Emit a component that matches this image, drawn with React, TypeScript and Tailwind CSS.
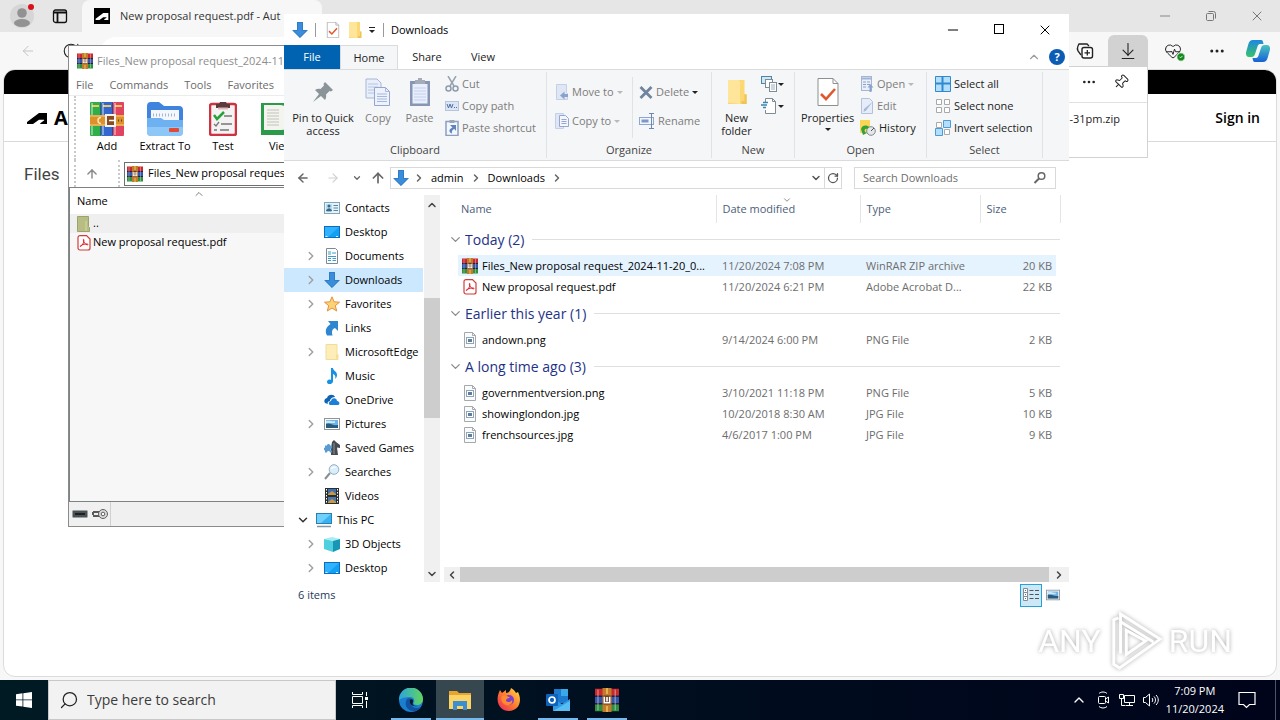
import { ReactNode } from "react";
import {
  ArrowDownToLine,
  ArrowLeft,
  ArrowRight,
  ArrowUp,
  CheckCircle2,
  ChevronDown,
  ChevronLeft,
  ChevronRight,
  ChevronUp,
  Ellipsis,
  HeartPulse,
  Minus,
  Pin,
  RotateCw,
  Search,
  X,
} from "lucide-react";

interface IIcon {
  className?: string;
}

/* ---------- shared icons ---------- */

const RarIcon = ({ className = "size-4" }: IIcon) => (
  <svg viewBox="0 0 16 16" className={className}>
    <rect width="16" height="5" y="0.5" fill="#c9282d" />
    <rect width="16" height="5" y="5.5" fill="#3557a8" />
    <rect width="16" height="5" y="10.5" fill="#2f8f3e" />
    <path d="M0 5.5h16M0 10.5h16" stroke="#2a1c3c" />
    <path d="M2 1v14M13.5 1v14" stroke="#fff" strokeOpacity="0.35" />
    <rect x="5" width="6" height="16" fill="#c27a2c" />
    <rect x="5.5" y="5" width="5" height="6" fill="#6b3b1e" />
    <path d="M6.2 5.8v4h3.6v-4M8 6v3" stroke="#fff" strokeWidth="1.1" fill="none" />
    <path d="M8 0v4M8 12v4" stroke="#f2c55c" />
  </svg>
);

const DownloadIcon = ({ className = "size-4" }: IIcon) => (
  <svg viewBox="0 0 16 16" className={className}>
    <path d="M5 0h6v8h5l-8 8-8-8h5z" fill="#3a8ddb" />
    <path d="M5.500.5h5v8h4.300L8 15.300 1.200 8.500h4.300z" fill="none" stroke="#2f7cc4" />
  </svg>
);

const PdfIcon = ({ className = "size-4" }: IIcon) => (
  <svg viewBox="0 0 16 16" className={className}>
    <path d="M4 .6h6.500l3.500 3.500V13a2 2 0 0 1-2 2H4a2 2 0 0 1-2-2V2.600a2 2 0 0 1 2-2z" fill="#fff" stroke="#d23c3c" strokeWidth="1.200" />
    <path d="M4.500 11.500c1.500-.6 3.500-3.500 3.400-6.500 0-1-.8-.8-.6.2.5 2.300 2 4.300 4 4.700 1 .1 1-.8 0-.9-2-.2-4.500.4-6.500 1.500-1 .6-.8 1.300-.3 1z" fill="none" stroke="#d8232a" />
  </svg>
);

const ImageFileIcon = () => (
  <svg viewBox="0 0 16 16" className="size-4">
    <path d="M2.500.5h8l3 3v12h-11z" fill="#fbfbfb" stroke="#a3a9ad" />
    <path d="M10.500.5v3h3" fill="none" stroke="#a3a9ad" />
    <rect x="4.500" y="5.500" width="7" height="6" fill="#fff" stroke="#8fa4b8" />
    <path d="M6 7h4v3H6z" fill="#5c7f9f" />
  </svg>
);

const FolderIcon = ({ className = "size-4" }: IIcon) => (
  <svg viewBox="0 0 16 16" className={className}>
    <path d="M2 0h11v9l1 1v6H2z" fill="#fbd873" />
    <path d="M2 0h7l1 1v15l-8-1z" fill="#ffe59a" />
    <path d="M13 9.500h1.500V16H11v-2h2z" fill="#efc454" />
  </svg>
);

const PaleFolderIcon = () => (
  <svg viewBox="0 0 16 16" className="size-4">
    <path d="M2 .5h11v9l1 1v5H2z" fill="#fdeeb9" stroke="#f3dc96" />
    <path d="M12 10.500h1.500v4H12z" fill="#f5dc91" />
  </svg>
);

const DesktopIcon = () => (
  <svg viewBox="0 0 16 16" className="size-4">
    <rect x=".5" y="2.500" width="15" height="11" fill="#12a0f5" stroke="#0c6dbf" />
    <path d="M1 3h14L4 13H1z" fill="#31b2ff" />
    <path d="M1.500 12.500h2M12 12.500h2" stroke="#dff2ff" />
  </svg>
);

const ContactsIcon = () => (
  <svg viewBox="0 0 16 16" className="size-4">
    <rect x=".5" y="2.500" width="15" height="11" fill="#e5f4fb" stroke="#7fa6bb" />
    <rect x="2" y="4" width="6" height="7" fill="#b7ddef" />
    <circle cx="5" cy="6" r="1.500" fill="#3c6886" />
    <path d="M2.500 11c0-3 5-3 5 0zM9.500 5.500H14M9.500 8H14M9.500 10.500H14" fill="#3c6886" stroke="#3c6886" strokeWidth=".8" />
  </svg>
);

const DocumentsIcon = () => (
  <svg viewBox="0 0 16 16" className="size-4">
    <path d="M2.500.5h9l2 2v13h-11z" fill="#fff" stroke="#7b8a94" />
    <path d="M4 4h3M4 6h3M8 5h4M4 8.500h8M4 10.500h3M8.500 10.500H12M4 12.500h3M8.500 12.500H12" stroke="#3d9bc9" />
  </svg>
);

const StarIcon = () => (
  <svg viewBox="0 0 16 16" className="size-4">
    <path d="M8 .8l2.100 5 5.400.4-4.200 3.500 1.400 5.300L8 12.100 3.300 15l1.400-5.300L.5 6.200l5.400-.4z" fill="#fbd277" stroke="#e4913c" />
  </svg>
);

const LinksIcon = () => (
  <svg viewBox="0 0 16 16" className="size-4">
    <path d="M4 1h10v10l-3-3c-3 1-3.500 3.500-2.500 7.500H3C.5 11 2 7 6.500 4z" fill="#2e86d0" />
  </svg>
);

const MusicIcon = () => (
  <svg viewBox="0 0 16 16" className="size-4">
    <path d="M7 0h2c0 3 4 3 4 7 0 2-1 3-2 4 1-3 0-4-2-5v7c0 4-6 4-6 1 0-2 2-3 4-2z" fill="#1791e0" />
  </svg>
);

const OneDriveIcon = () => (
  <svg viewBox="0 0 16 16" className="size-4">
    <path d="M1 11c-2-3 1-5 2-5 1-4 7-4 8-1 -4 0-5 3-5 4-2 0-3 2-2 3z" fill="#0f64b5" />
    <path d="M6 13c-2-1-1-4 1-4 1-4 6-3 6 0 3 0 3 4 1 4z" fill="#1a7fd6" />
  </svg>
);

const PicturesIcon = ({ className = "size-4" }: IIcon) => (
  <svg viewBox="0 0 16 16" className={className}>
    <rect x=".5" y="2.500" width="15" height="11" fill="#fff" stroke="#8b959c" />
    <rect x="2" y="4" width="12" height="8" fill="#6fb3e6" />
    <path d="M2 8c4-2 6 2 12 1v3H2z" fill="#2a5a7c" />
    <path d="M2 5c4-1 6 1 9 0v2H2z" fill="#cfe8f7" />
  </svg>
);

const GamesIcon = () => (
  <svg viewBox="0 0 16 16" className="size-4">
    <path d="M8 2l2-2 2 2 4 3v3l-3-.5 1 7.500H7V8z" fill="#454b50" />
    <path d="M1 5.500h2c0-2 3-2 3 0h2v3c-2 0-2 2 0 2v2H6c0-2-3-2-3 0H1v-2c-1.500 0-1.500-3 0-3z" fill="#5b9bd0" />
    <path d="M10 3v11" stroke="#8c9499" />
  </svg>
);

const SearchesIcon = () => (
  <svg viewBox="0 0 16 16" className="size-4">
    <path d="M1 15l5-6" stroke="#8a8f94" strokeWidth="2" />
    <circle cx="10" cy="5.500" r="4.800" fill="#d9effc" stroke="#93aec2" />
    <path d="M7.500 5c1-2 3-2 4.500-1.500" stroke="#fff" strokeWidth="1.300" fill="none" />
  </svg>
);

const VideosIcon = () => (
  <svg viewBox="0 0 16 16" className="size-4">
    <rect x="1" y="0" width="14" height="16" fill="#2a2d31" />
    <path d="M2.500 1v14M13.500 1v14" stroke="#fff" strokeDasharray="1.500 1.500" />
    <rect x="4" y="1" width="8" height="6" fill="#3f6fb0" />
    <rect x="4" y="9" width="8" height="6" fill="#4a77ae" />
    <path d="M4 6l4-3 4 3v1H4zM4 14l4-3 4 3v1H4z" fill="#c79a3b" />
  </svg>
);

const ThisPcIcon = () => (
  <svg viewBox="0 0 16 16" className="size-4">
    <rect x=".5" y="1.500" width="15" height="10" fill="#36b3f2" stroke="#2c7db0" />
    <path d="M1 2h14L5 11H1z" fill="#6fd0fb" />
    <path d="M1 14.500h14" stroke="#7f98a6" strokeWidth="1.500" />
  </svg>
);

const ObjectsIcon = () => (
  <svg viewBox="0 0 16 16" className="size-4">
    <path d="M0 3l8-2 8 2-6 2z" fill="#a8ecf3" />
    <path d="M0 3l9 2v11l-9-3z" fill="#4fcfe0" />
    <path d="M9 5l7-2v10l-7 3z" fill="#1896b5" />
  </svg>
);

/* ---------- ribbon icons ---------- */

const PinIcon = () => (
  <svg viewBox="0 0 24 24" className="size-6">
    <path d="M14 2l8 8-2 1.500-1.500-.5-3.500 3.500c.5 2 0 4-1 5.500l-4-4L2 22l6-8-4-4c1.500-1 3.500-1.500 5.500-1L13 5.500 12.500 4z" fill="#8b9599" />
  </svg>
);

const CopyIcon = () => (
  <svg viewBox="0 0 26 28" className="h-7 w-[26px]">
    <path d="M1 1h11l4 4v15H1z" fill="#e9effa" stroke="#a9b7d6" />
    <path d="M3 6h10M3 9h10M3 12h6M3 15h6" stroke="#b7c5e3" />
    <path d="M9.500 9.500h11l4 4v14h-15z" fill="#edf2fc" stroke="#94a7d0" />
    <path d="M20.500 9.500v4h4M12 16h10M12 18.500h10M12 21h10M12 23.500h10" stroke="#a6b7dd" fill="none" />
  </svg>
);

const PasteIcon = () => (
  <svg viewBox="0 0 22 28" className="h-7 w-[22px]">
    <rect x="1" y="3" width="20" height="25" fill="#8696b4" />
    <rect x="3.500" y="6" width="15" height="19.500" fill="#e8eefb" />
    <path d="M9 0h4v2h3v4H6V2h3z" fill="#a3acb8" />
    <path d="M5 10h12M5 13h12M5 16h12M5 19h12M5 22h12" stroke="#c4d1ee" />
  </svg>
);

const CutIcon = () => (
  <svg viewBox="0 0 14 16" className="h-4 w-3.5">
    <path d="M3 0l6 10M11 0L5 10" stroke="#9aa4ae" strokeWidth="1.500" />
    <circle cx="3.500" cy="12.500" r="2.500" fill="none" stroke="#8f9cad" strokeWidth="1.500" />
    <circle cx="10.500" cy="12.500" r="2.500" fill="none" stroke="#8f9cad" strokeWidth="1.500" />
  </svg>
);

const CopyPathIcon = () => (
  <svg viewBox="0 0 14 16" className="h-4 w-3.5">
    <rect x=".5" y="3.500" width="13" height="9" fill="#dbe5f5" stroke="#b6c5df" />
    <path d="M2 6l1.500 4L5 6l1.500 4L8 6M9 9.500h1M11 9.500h1" fill="none" stroke="#53729f" />
  </svg>
);

const PasteShortcutIcon = () => (
  <svg viewBox="0 0 14 16" className="h-4 w-3.5">
    <rect x="1" y="1.500" width="12" height="14" fill="#f3f7fd" stroke="#8c9fc0" strokeWidth="1.500" />
    <path d="M4.500 0h5v3h-5z" fill="#9aa6b8" />
    <path d="M5 5h6v6L9.500 9C7.500 9.500 6.500 11 7 13.500c-3.500-1-3.500-4.500.5-6z" fill="#5d84bd" />
  </svg>
);

const MoveToIcon = () => (
  <svg viewBox="0 0 14 16" className="h-4 w-3.5">
    <path d="M1.500.5h10v8l1 1v6h-11z" fill="#dfe7f5" stroke="#c3d0e8" />
    <path d="M13 10H9.500V7.500L5 11.500l4.500 4V13H13z" fill="#8ba3cc" />
  </svg>
);

const CopyToIcon = () => (
  <svg viewBox="0 0 14 16" className="h-4 w-3.5">
    <path d="M.5.5h8v15h-8z" fill="#dfe7f5" stroke="#c3d0e8" />
    <path d="M4.500 2.500h6l3 3v8h-9z" fill="#f3f6fc" stroke="#93a7cf" />
    <path d="M6.500 6.500h5M6.500 8.500h5M6.500 10.500h5" stroke="#93a7cf" />
  </svg>
);

const DeleteIcon = () => (
  <svg viewBox="0 0 14 16" className="h-4 w-3.5">
    <path d="M1.500 3l11 11M12.500 3l-11 11" stroke="#71849f" strokeWidth="2.800" />
  </svg>
);

const RenameIcon = () => (
  <svg viewBox="0 0 16 16" className="size-4">
    <rect x=".5" y="4.500" width="14" height="7" fill="#f1f5fc" stroke="#8fa7d0" />
    <path d="M2.500 6.500h7v3h-7z" fill="#7d98c8" />
    <path d="M10 .5h5M12.500.5v15M10 15.500h5" stroke="#6e86ad" />
  </svg>
);

const NewItemIcon = () => (
  <svg viewBox="0 0 16 16" className="size-4">
    <rect x=".5" y=".5" width="10" height="7" fill="#cfe6f3" stroke="#4b87a8" />
    <rect x="4.500" y="3.500" width="7" height="8" fill="#fff" stroke="#7d8c95" />
    <rect x="8.500" y="6.500" width="7" height="9" fill="#fff" stroke="#7d8c95" />
    <path d="M10 9h4M10 11h4M10 13h4" stroke="#9fb0b9" />
  </svg>
);

const EasyAccessIcon = () => (
  <svg viewBox="0 0 16 16" className="size-4">
    <path d="M4.500 5V.5h7l3 3v12h-10V12" fill="#fff" stroke="#7d8c95" />
    <path d="M11.500.5v3h3" fill="none" stroke="#7d8c95" />
    <path d="M2 4.500h5M0 7h6M2 9.500h3" stroke="#3b86b0" strokeWidth="1.300" />
  </svg>
);

const PropertiesIcon = ({ className = "h-7 w-[22px]" }: IIcon) => (
  <svg viewBox="0 0 22 28" className={className}>
    <path d="M1 .5h15l5 5v22H1z" fill="#fff" stroke="#8f8f8f" />
    <path d="M16 .5v5h5" fill="none" stroke="#8f8f8f" />
    <path d="M4 16l5 5 9-10" fill="none" stroke="#e0582f" strokeWidth="2.600" />
  </svg>
);

const OpenIcon = () => (
  <svg viewBox="0 0 14 16" className="h-4 w-3.5">
    <rect x="1.500" y=".5" width="10" height="14" fill="#eaf0fa" stroke="#a5b4d1" />
    <path d="M2 2.500h9" stroke="#9fb2d6" strokeWidth="2" />
    <path d="M3 6h3M3 8.500h3M3 11h3M7 6h3M7 8.500h3" stroke="#8aa0ca" />
    <path d="M10.500 8l3 3.500h-2V16h-2v-4.500h-2z" fill="#8ba3cc" />
  </svg>
);

const EditIcon = () => (
  <svg viewBox="0 0 14 16" className="h-4 w-3.5">
    <path d="M1.500.5h8l3 3v12h-11z" fill="#e6edf9" stroke="#b3c1dc" />
    <path d="M12.500 4L6 12.500l-2.500 1.500.5-3z" fill="#a5b7d8" />
  </svg>
);

const HistoryIcon = () => (
  <svg viewBox="0 0 16 16" className="size-4">
    <path d="M0 0h10v9l1 1v3H0z" fill="#fbd554" />
    <circle cx="11" cy="11" r="4.300" fill="#e4e8ea" stroke="#82898d" />
    <path d="M11 11l3-3" stroke="#4e5558" />
    <path d="M1 9c1-4 6-4.500 8-2L7 9c-2-1-3 1-2 3l2 1-4 2z" fill="#2fa23c" />
  </svg>
);

const SelectAllIcon = () => (
  <svg viewBox="0 0 16 16" className="size-4">
    <path d="M.5.5h15v15H.5z" fill="#b4defa" stroke="#2f8ad0" />
    <path d="M7.500 0v16M0 7.500h16" stroke="#2f8ad0" strokeWidth="2" />
  </svg>
);

const SelectNoneIcon = () => (
  <svg viewBox="0 0 16 16" className="size-4">
    <path d="M1.500 1.500h5v5h-5zM9.500 1.500h5v5h-5zM1.500 9.500h5v5h-5zM9.500 9.500h5v5h-5z" fill="#fff" stroke="#a9a9a9" />
  </svg>
);

const InvertIcon = () => (
  <svg viewBox="0 0 16 16" className="size-4">
    <path d="M1.500 2.500h5v5h-5zM9.500 9.500h5v5h-5z" fill="#fff" stroke="#a9a9a9" />
    <path d="M8.500.5h7v7h-7zM.5 8.500h7v7h-7z" fill="#b4defa" stroke="#4b9bd8" />
  </svg>
);

/* ---------- browser ---------- */

const AutodeskMark = ({ className }: IIcon) => (
  <svg viewBox="0 0 22 16" className={className}>
    <path d="M1 14V12L13 3h8v11h-6c-1 0-1-.6-.4-1L18 10.500c.4-.3.200-.7-.3-.7H13L7 14z" fill="currentColor" />
  </svg>
);

const CopilotIcon = () => (
  <svg viewBox="0 0 24 24" className="size-6">
    <defs>
      <linearGradient id="cop1" x1="0" y1="0" x2="0" y2="1">
        <stop offset="0" stopColor="#1f87e0" />
        <stop offset="1" stopColor="#35c46b" />
      </linearGradient>
      <linearGradient id="cop2" x1="0" y1="0" x2="0" y2="1">
        <stop offset="0" stopColor="#49c5c2" />
        <stop offset="1" stopColor="#1660d8" />
      </linearGradient>
    </defs>
    <path d="M7 1h8c2 0 2 2 2.500 4H14c-1.500 0-2 1-2.500 2.500L9 15c-.6 2-1.500 3-3.500 3H3c-3 0-3.500-3-2.600-6l2-7C3.200 2.300 4.500 1 7 1z" fill="url(#cop1)" />
    <path d="M17 23H9c-2 0-2-2-2.500-4H10c1.500 0 2-1 2.500-2.500L15 9c.6-2 1.500-3 3.500-3H21c3 0 3.500 3 2.600 6l-2 7c-.8 2.700-2.100 4-4.600 4z" fill="url(#cop2)" />
  </svg>
);

const Browser = () => (
  <section className="absolute inset-0 flex flex-col bg-[#f7f7f7]">
    <div className="flex h-8 items-stretch bg-[#e6e6e6]">
      <button aria-label="Profile" className="relative ml-2 flex w-7 items-center justify-center">
        <svg viewBox="0 0 24 24" className="size-6">
          <circle cx="12" cy="12" r="12" fill="#d6d6d6" />
          <circle cx="12" cy="9" r="4.800" fill="#929292" />
          <ellipse cx="12" cy="19" rx="8" ry="4" fill="#929292" />
        </svg>
        <span className="absolute top-1 right-0.5 size-1.5 rounded-full bg-[#d8121c]" />
      </button>
      <button aria-label="Tab actions" className="ml-4 flex w-4 items-center">
        <svg viewBox="0 0 16 16" className="size-4">
          <rect x="1.500" y="2" width="13" height="12.500" rx="2" fill="none" stroke="#111" strokeWidth="1.300" />
          <path d="M1.500 4.500h13M5.500 5v9" stroke="#111" strokeWidth="1.800" />
        </svg>
      </button>
      <div className="ml-3.5 flex w-[240px] items-center gap-2.5 rounded-t-lg bg-[#f7f7f7] pl-3 text-[#333]">
        <span className="flex size-4 shrink-0 items-center justify-center bg-black text-white">
          <AutodeskMark className="w-3.5" />
        </span>
        <span className="text-[11px] whitespace-nowrap">New proposal request.pdf - Aut</span>
      </div>
      <div className="ml-auto flex items-center gap-7.5 pr-[15px] text-[#777]">
        <button aria-label="Minimize"><Minus className="size-4" strokeWidth={1.300} /></button>
        <button aria-label="Restore">
          <svg viewBox="0 0 16 16" className="size-4">
            <rect x="3.500" y="5.500" width="7" height="7" rx="1" fill="none" stroke="#777" />
            <path d="M5.500 3.500h5a2 2 0 0 1 2 2v5" fill="none" stroke="#777" />
          </svg>
        </button>
        <button aria-label="Close"><X className="size-4" strokeWidth={1.500} /></button>
      </div>
    </div>
    <div className="flex h-[37px] shrink-0 items-center pr-2.5 text-[#222]">
      <button aria-label="Back" className="ml-5 text-[#c4c4c4]"><ArrowLeft className="size-4" strokeWidth={1.500} /></button>
      <button aria-label="Refresh" className="ml-6.5"><RotateCw className="size-4.5" strokeWidth={1.500} /></button>
      <div className="mt-1 ml-5 flex h-8 flex-1 items-center rounded-2xl bg-white pl-4">
        <Search className="size-4" strokeWidth={1.300} />
      </div>
      <button aria-label="Collections" className="mr-3.5 ml-3">
        <svg viewBox="0 0 18 18" className="size-4.5">
          <path d="M5 13L2 9c-1-2-1-3 0-5l1-2h8l2 2" fill="none" stroke="#222" strokeWidth="1.300" />
          <rect x="6" y="5.500" width="10.500" height="10.500" rx="2" fill="#fff" stroke="#222" strokeWidth="1.400" />
          <path d="M11.300 8v5.500M8.500 10.800H14" stroke="#222" strokeWidth="1.300" />
        </svg>
      </button>
      <button aria-label="Downloads" className="flex h-8 w-10 items-center justify-center rounded-t-md bg-[#d2d2d2]">
        <ArrowDownToLine className="size-5" strokeWidth={1.300} />
      </button>
      <button aria-label="Browser essentials" className="relative ml-4">
        <HeartPulse className="size-4.5" strokeWidth={1.300} />
        <CheckCircle2 className="absolute -right-1 -bottom-0.5 size-2.5 fill-[#178a1e] text-white" />
      </button>
      <button aria-label="More" className="ml-6.5"><Ellipsis className="size-4.5" /></button>
      <button aria-label="Copilot" className="ml-5"><CopilotIcon /></button>
    </div>
    <div className="mr-[3px] mb-[3px] ml-[3px] flex flex-1 flex-col overflow-hidden rounded-xl border border-[#dcdcdc] bg-white">
      <div className="h-6 bg-black" />
      <header className="flex h-12 items-center justify-between border-b border-[#d9d9d9] pr-4 pl-[22px]">
        <span className="flex items-center gap-1.5 text-xl font-bold">
          <AutodeskMark className="w-[22px]" />
          A
        </span>
        <a href="#signin" className="text-sm font-semibold">Sign in</a>
      </header>
      <h1 className="mt-5 ml-5 font-['Roboto',sans-serif] text-[17px] leading-6 text-[#444]">Files</h1>
    </div>
    <div className="absolute top-[66px] right-[132px] flex w-[120px] flex-col border border-[#d2d2d2] bg-white text-[#222]">
      <div className="flex h-9 items-start justify-end gap-4 border-b border-[#e2e2e2] pt-[7px] pr-4.5">
        <Ellipsis className="size-4" />
        <Pin className="size-4 rotate-45" strokeWidth={1.500} />
      </div>
      <p className="flex h-[54px] justify-end pt-1 pr-[27px] text-[11px] leading-6">-31pm.zip</p>
    </div>
  </section>
);

/* ---------- WinRAR ---------- */

const rarTools = [
  {
    name: "Add",
    icon: (
      <svg viewBox="0 0 34 34" className="size-[34px]">
        <rect x="0" y="0" width="11" height="34" rx="1" fill="#2fae4a" />
        <rect x="11" y="0" width="12" height="34" rx="1" fill="#3468cf" />
        <rect x="23" y="0" width="11" height="34" rx="1" fill="#e04460" />
        <path d="M2 4h7M13 4h8M25 4h7" stroke="#f0c95c" strokeWidth="2" />
        <path d="M2 1v32M13 1v32M25 1v32" stroke="#fff" strokeOpacity=".4" strokeWidth="2" />
        <path d="M10.500 0v34M22.500 0v34" stroke="#1d2d55" strokeOpacity=".5" />
        <rect x="0" y="13" width="34" height="11" fill="#dc912c" />
        <path d="M0 14h34M0 23h34" stroke="#f6cf77" />
        <rect x="16" y="13" width="9" height="11" fill="#8a4b1d" stroke="#f3f3f3" strokeWidth="2" />
        <path d="M19 18.500h6" stroke="#fff" strokeWidth="1.500" />
        <path d="M11 15.500a3 3 0 1 0 0 6" fill="none" stroke="#fbe7b4" strokeWidth="1.500" />
        <path d="M28 18.500h1M31 18.500h1" stroke="#6b3b1e" strokeWidth="2" />
      </svg>
    ),
  },
  {
    name: "Extract To",
    icon: (
      <svg viewBox="0 0 36 34" className="h-[34px] w-9">
        <path d="M0 4a4 4 0 0 1 4-4h8l5 4h15a4 4 0 0 1 4 4v10H0z" fill="#3f83df" />
        <rect x="4" y="8" width="28" height="14" fill="#f4f7fb" />
        <path d="M6 13h24" stroke="#a6b8cf" strokeDasharray="1 2" strokeWidth="3" />
        <path d="M0 16h14l3 2h19v12a4 4 0 0 1-4 4H4a4 4 0 0 1-4-4z" fill="#6db1f3" />
        <path d="M0 25h36v5a4 4 0 0 1-4 4H4a4 4 0 0 1-4-4z" fill="#8cc7f8" />
        <rect x="22" y="26" width="10" height="4" rx="1" fill="#e14a34" />
      </svg>
    ),
  },
  {
    name: "Test",
    icon: (
      <svg viewBox="0 0 28 34" className="h-[34px] w-7">
        <rect x="1" y="2" width="26" height="31" rx="2" fill="#f3f3f3" stroke="#cf3240" strokeWidth="2.500" />
        <path d="M7 2h3l1-2h6l1 2h3v4H7z" fill="#5a3a3d" />
        <path d="M9 6.500h10" stroke="#e3b6ba" strokeWidth="2" />
        <path d="M5 13l3 4 7-7" fill="none" stroke="#28a03c" strokeWidth="2.500" />
        <path d="M15 14h8M5 22l2 2 3-4M12 22h11M5 28h3M11 28h9" stroke="#777" strokeWidth="1.300" fill="none" />
      </svg>
    ),
  },
  {
    name: "View",
    icon: (
      <svg viewBox="0 0 40 34" className="h-[34px] w-10">
        <rect x="0" y="1" width="25" height="32" fill="#2b9a4a" />
        <rect x="25" y="3" width="15" height="28" fill="#8b1e2a" />
        <path d="M3 3h16c3 0 5 1 6 3v23c-2-2-4-1-6-1H3z" fill="#f4f4ee" />
        <path d="M6 8h12M6 11h12M6 14h12M6 17h12M6 20h12M6 23h12" stroke="#c2c2bc" />
      </svg>
    ),
  },
];

const WinRar = () => (
  <section className="absolute top-[45px] left-[68px] flex h-[482px] w-[260px] flex-col overflow-hidden border border-[#8b8b8b] bg-white text-[11px]">
    <div className="flex h-[30px] shrink-0 items-center gap-1 pl-2 whitespace-nowrap text-[#8d8d8d]">
      <RarIcon className="size-4" />
      <span>Files_New proposal request_2024-11</span>
    </div>
    <nav className="flex h-5 shrink-0 items-center gap-4 border-b border-[#ececec] pl-[7px] text-[#6b6b6b]">
      <button>File</button>
      <button>Commands</button>
      <button>Tools</button>
      <button>Favorites</button>
    </nav>
    <div className="ml-[5px] flex h-16 shrink-0 items-start border-l-2 border-dotted border-[#c9c9c9] pt-1.5 pl-0.5">
      {rarTools.map((tool) => (
        <button key={tool.name} className="flex w-[58px] shrink-0 flex-col items-center whitespace-nowrap">
          {tool.icon}
          <span className="leading-5">{tool.name}</span>
        </button>
      ))}
    </div>
    <div className="ml-[5px] flex h-[27px] shrink-0 items-center border-l-2 border-dotted border-[#c9c9c9]">
      <button aria-label="Up" className="flex w-8 justify-center text-[#8a8a8a]"><ArrowUp className="size-3.5" strokeWidth={2.500} /></button>
      <span className="ml-2.5 h-full border-l-2 border-dotted border-[#c9c9c9]" />
      <label className="ml-1 flex h-6 flex-1 items-center gap-[5px] border border-[#6f6f6f] pl-0.5">
        <RarIcon className="size-4 shrink-0" />
        <input aria-label="Archive path" className="min-w-0 flex-1 outline-none" defaultValue="Files_New proposal request_2024" />
      </label>
    </div>
    <div className="flex flex-1 flex-col border border-[#7d8285] bg-[#f7f7f7]">
      <div className="relative flex h-[26px] items-center bg-white pl-[7px]">
        Name
        <ChevronUp className="absolute top-0 left-[123px] size-3 text-[#555]" strokeWidth={1.500} />
      </div>
      <div className="flex h-[19px] items-center gap-px bg-[#efefef] pl-1.5">
        <svg viewBox="0 0 16 16" className="size-4">
          <path d="M1.500.5h11v10l1 1v4h-12z" fill="#b8bd84" stroke="#9da36c" />
          <path d="M10 5v10" stroke="#d3d7a8" />
        </svg>
        <span>..</span>
      </div>
      <div className="flex h-[19px] items-center gap-px pl-1.5">
        <PdfIcon />
        <span>New proposal request.pdf</span>
      </div>
    </div>
    <div className="flex h-6 shrink-0 items-stretch bg-[#f0f0f0]">
      <span className="flex w-[42px] items-center justify-center gap-1 border-r border-[#d0d0d0]">
        <svg viewBox="0 0 16 8" className="h-2 w-4">
          <rect x=".5" y=".5" width="15" height="7" rx="1" fill="#4a5053" stroke="#98a0a3" />
          <path d="M3 4h10" stroke="#1d2022" strokeWidth="2" />
        </svg>
        <svg viewBox="0 0 16 12" className="h-3 w-4">
          <path d="M1 4h8M1 8h8M1 4v3" stroke="#5a5a5a" strokeWidth="2" />
          <circle cx="11" cy="6" r="4.500" fill="#d9d9d9" stroke="#606060" />
          <circle cx="11" cy="6" r="1.800" fill="#fff" stroke="#606060" />
        </svg>
      </span>
    </div>
  </section>
);

/* ---------- Explorer ---------- */

interface IRibbonGroup {
  name: string;
  className: string;
  children: ReactNode;
}

const RibbonGroup = ({ name, className, children }: IRibbonGroup) => (
  <div className={`my-0.5 flex flex-col border-r border-[#dfe3e7] ${className}`}>
    <div className="flex flex-1 pt-px">{children}</div>
    <span className="text-center leading-4 text-[#444]">{name}</span>
  </div>
);

interface IBigButton {
  icon: ReactNode;
  className: string;
  children: ReactNode;
}

const BigButton = ({ icon, className, children }: IBigButton) => (
  <button className={`flex flex-col items-center pt-1 leading-[13px] ${className}`}>
    <span className="mb-[5px] flex h-[29px] items-center">{icon}</span>
    {children}
  </button>
);

interface ISmallButton {
  icon: ReactNode;
  label: string;
  muted?: boolean;
  arrow?: string;
}

const Caret = ({ className = "text-[#222]" }: IIcon) => (
  <svg viewBox="0 0 6 3" className={`h-[3px] w-1.5 ${className}`}>
    <path d="M0 0h6L3 3z" fill="currentColor" />
  </svg>
);

const SmallButton = ({ icon, label, muted, arrow }: ISmallButton) => (
  <button className={`flex h-[22px] items-center gap-[3px] whitespace-nowrap ${muted ? "text-[#7c7c7c]" : "text-[#222]"}`}>
    {icon}
    {label}
    {arrow && <Caret className={arrow} />}
  </button>
);

const Ribbon = () => (
  <div className="flex h-[92px] shrink-0 border-y border-[#dadbdc] bg-[#f5f6f7]">
    <RibbonGroup name="Clipboard" className="w-[263px]">
      <BigButton icon={<PinIcon />} className="w-[78px]">Pin to Quick<br />access</BigButton>
      <BigButton icon={<CopyIcon />} className="w-8 text-[#7c7c7c]">Copy</BigButton>
      <BigButton icon={<PasteIcon />} className="w-[51px] text-[#7c7c7c]">Paste</BigButton>
      <div className="flex flex-col">
        <SmallButton icon={<CutIcon />} label="Cut" muted />
        <SmallButton icon={<CopyPathIcon />} label="Copy path" muted />
        <SmallButton icon={<PasteShortcutIcon />} label="Paste shortcut" muted />
      </div>
    </RibbonGroup>
    <RibbonGroup name="Organize" className="w-[165px]">
      <div className="my-1 flex w-[86px] flex-col gap-[7px] border-r border-[#dfe3e7] pt-1 pl-2">
        <SmallButton icon={<MoveToIcon />} label="Move to" muted arrow="text-[#b9b9b9]" />
        <SmallButton icon={<CopyToIcon />} label="Copy to" muted arrow="text-[#b9b9b9]" />
      </div>
      <div className="my-1 flex flex-col gap-[7px] pt-1 pl-1.5">
        <SmallButton icon={<DeleteIcon />} label="Delete" muted arrow="text-[#222]" />
        <SmallButton icon={<RenameIcon />} label="Rename" muted />
      </div>
    </RibbonGroup>
    <RibbonGroup name="New" className="w-[83px]">
      <BigButton icon={<FolderIcon className="h-[26px] w-6" />} className="w-[49px]">New<br />folder</BigButton>
      <div className="flex flex-col">
        <button aria-label="New item" className="flex h-[22px] items-center gap-px"><NewItemIcon /><Caret /></button>
        <button aria-label="Easy access" className="flex h-[22px] items-center gap-px"><EasyAccessIcon /><Caret /></button>
      </div>
    </RibbonGroup>
    <RibbonGroup name="Open" className="w-[132px]">
      <BigButton icon={<PropertiesIcon />} className="w-[65px]">
        Properties
        <Caret className="mt-1 text-[#222]" />
      </BigButton>
      <div className="flex flex-col">
        <SmallButton icon={<OpenIcon />} label="Open" muted arrow="text-[#b9b9b9]" />
        <SmallButton icon={<EditIcon />} label="Edit" muted />
        <SmallButton icon={<HistoryIcon />} label="History" />
      </div>
    </RibbonGroup>
    <RibbonGroup name="Select" className="w-[116px]">
      <div className="flex flex-col pl-2">
        <SmallButton icon={<SelectAllIcon />} label="Select all" />
        <SmallButton icon={<SelectNoneIcon />} label="Select none" />
        <SmallButton icon={<InvertIcon />} label="Invert selection" />
      </div>
    </RibbonGroup>
  </div>
);

const folders = [
  { name: "Contacts", icon: <ContactsIcon />, expandable: false },
  { name: "Desktop", icon: <DesktopIcon />, expandable: false },
  { name: "Documents", icon: <DocumentsIcon />, expandable: true },
  { name: "Downloads", icon: <DownloadIcon />, expandable: true, active: true },
  { name: "Favorites", icon: <StarIcon />, expandable: true },
  { name: "Links", icon: <LinksIcon />, expandable: false },
  { name: "MicrosoftEdge", icon: <PaleFolderIcon />, expandable: true },
  { name: "Music", icon: <MusicIcon />, expandable: false },
  { name: "OneDrive", icon: <OneDriveIcon />, expandable: false },
  { name: "Pictures", icon: <PicturesIcon />, expandable: true },
  { name: "Saved Games", icon: <GamesIcon />, expandable: false },
  { name: "Searches", icon: <SearchesIcon />, expandable: true },
  { name: "Videos", icon: <VideosIcon />, expandable: false },
  { name: "This PC", icon: <ThisPcIcon />, expandable: true, root: true },
  { name: "3D Objects", icon: <ObjectsIcon />, expandable: true },
  { name: "Desktop", icon: <DesktopIcon />, expandable: true },
];

const FolderTree = () => (
  <ul className="w-[139px] shrink-0 overflow-hidden pt-px text-black">
    {folders.map((folder, i) => (
      <li key={i}>
        <button
          className={`flex h-6 w-full items-center whitespace-nowrap ${folder.root ? "pl-3" : "pl-5"} ${folder.active ? "bg-[#cce8ff]" : ""}`}
        >
          <span className="flex w-5 shrink-0">
            {folder.expandable &&
              (folder.root ? (
                <ChevronDown className="size-3.5 text-[#333]" strokeWidth={2.500} />
              ) : (
                <ChevronRight className="size-3.5 text-[#a0a0a0]" strokeWidth={2.500} />
              ))}
          </span>
          <span className="mr-[5px] shrink-0">{folder.icon}</span>
          {folder.name}
        </button>
      </li>
    ))}
  </ul>
);

const groups = [
  {
    title: "Today (2)",
    files: [
      { name: "Files_New proposal request_2024-11-20_0...", icon: <RarIcon />, date: "11/20/2024 7:08 PM", type: "WinRAR ZIP archive", size: "20 KB", active: true },
      { name: "New proposal request.pdf", icon: <PdfIcon />, date: "11/20/2024 6:21 PM", type: "Adobe Acrobat D...", size: "22 KB" },
    ],
  },
  {
    title: "Earlier this year (1)",
    files: [{ name: "andown.png", icon: <ImageFileIcon />, date: "9/14/2024 6:00 PM", type: "PNG File", size: "2 KB" }],
  },
  {
    title: "A long time ago (3)",
    files: [
      { name: "governmentversion.png", icon: <ImageFileIcon />, date: "3/10/2021 11:18 PM", type: "PNG File", size: "5 KB" },
      { name: "showinglondon.jpg", icon: <ImageFileIcon />, date: "10/20/2018 8:30 AM", type: "JPG File", size: "10 KB" },
      { name: "frenchsources.jpg", icon: <ImageFileIcon />, date: "4/6/2017 1:00 PM", type: "JPG File", size: "9 KB" },
    ],
  },
];

const FileTable = () => (
  <table className="w-[616px] table-fixed text-left">
    <colgroup>
      <col className="w-3.5" />
      <col className="w-[258px]" />
      <col className="w-36" />
      <col className="w-[120px]" />
      <col className="w-[76px]" />
      <col className="w-1" />
    </colgroup>
    <thead>
      <tr className="h-7 text-[#4c607a]">
        <th />
        <th className="border-r border-[#e5e5e5] pl-[3px] font-normal">Name</th>
        <th className="relative border-r border-[#e5e5e5] pl-1.5 font-normal">
          Date modified
          <ChevronDown className="absolute top-0 left-[65px] size-2.5 text-[#777]" />
        </th>
        <th className="border-r border-[#e5e5e5] pl-1.5 font-normal">Type</th>
        <th className="pl-1.5 font-normal">Size</th>
        <th className="border-r border-[#e5e5e5]" />
      </tr>
    </thead>
    {groups.map((group) => (
      <tbody key={group.title}>
        <tr className="h-8">
          <th colSpan={6} className="pt-px font-normal">
            <button className="flex w-full items-center pl-1 text-sm text-[#1e3287]">
              <ChevronDown className="mr-0.5 size-[15px] text-[#8a8a8a]" />
              {group.title}
              <span className="ml-2 h-px flex-1 bg-[#dfdfdf]" />
            </button>
          </th>
        </tr>
        {group.files.map((file) => (
          <tr key={file.name} className="h-[21px] text-[#6d6d6d]">
            <td />
            <td className={file.active ? "bg-[#e5f3ff]" : ""}>
              <span className="flex items-center gap-1 pl-1 whitespace-nowrap text-black">
                <span className="shrink-0">{file.icon}</span>
                {file.name}
              </span>
            </td>
            <td className={`pl-1.5 ${file.active ? "bg-[#e5f3ff]" : ""}`}>{file.date}</td>
            <td className={`pl-1.5 whitespace-nowrap ${file.active ? "bg-[#e5f3ff]" : ""}`}>{file.type}</td>
            <td className={`pr-1 text-right ${file.active ? "bg-[#e5f3ff]" : ""}`}>{file.size}</td>
            <td />
          </tr>
        ))}
      </tbody>
    ))}
  </table>
);

const Explorer = () => (
  <section className="absolute top-3.5 left-[284px] flex h-[594px] w-[785px] flex-col bg-white text-[11px] leading-4 text-[#222]">
    <div className="flex h-[31px] shrink-0 items-center pl-2">
      <DownloadIcon />
      <span className="mr-2.5 ml-[7px] h-3.5 w-px bg-[#9a9a9a]" />
      <PropertiesIcon className="mr-[7px] h-4 w-3.5" />
      <FolderIcon />
      <button aria-label="Customize toolbar" className="ml-1.5 flex flex-col items-center gap-0.5">
        <span className="h-px w-1.5 bg-[#222]" />
        <Caret />
      </button>
      <span className="mr-[7px] ml-2 h-3.5 w-px bg-[#9a9a9a]" />
      <span className="text-black">Downloads</span>
      <div className="ml-auto flex gap-[30px] pr-4 text-black">
        <button aria-label="Minimize"><Minus className="size-4" strokeWidth={1.500} /></button>
        <button aria-label="Maximize">
          <svg viewBox="0 0 16 16" className="size-4">
            <rect x="3.500" y="2.500" width="9" height="9" fill="none" stroke="#000" />
          </svg>
        </button>
        <button aria-label="Close"><X className="size-4" strokeWidth={1.500} /></button>
      </div>
    </div>
    <div className="flex h-6 shrink-0 items-stretch">
      <button className="w-14 bg-[#0063b1] text-white">File</button>
      <button className="-mb-px w-[58px] border-x border-t border-[#dadbdc] bg-[#f5f6f7] pb-px">Home</button>
      <button className="w-[58px]">Share</button>
      <button className="w-[54px]">View</button>
      <div className="ml-auto flex items-center gap-2 pr-1">
        <button aria-label="Minimize ribbon"><ChevronUp className="size-3.5 text-[#9c9c9c]" /></button>
        <button aria-label="Help" className="size-4 rounded-full bg-[#0b5cb5] font-bold text-white">?</button>
      </div>
    </div>
    <Ribbon />
    <div className="flex h-[34px] shrink-0 items-center pr-[13px] pl-3 text-[#666]">
      <button aria-label="Back"><ArrowLeft className="size-3.5" strokeWidth={2.500} /></button>
      <button aria-label="Forward" className="ml-4 text-[#d0d0d0]"><ArrowRight className="size-3.5" /></button>
      <button aria-label="Recent" className="ml-3"><ChevronDown className="size-2.5" strokeWidth={3} /></button>
      <button aria-label="Up" className="ml-2"><ArrowUp className="size-4" strokeWidth={2.500} /></button>
      <div className="ml-1 flex h-[22px] flex-1 items-center border border-[#d9d9d9] pl-0.5 text-black">
        <DownloadIcon />
        <ChevronRight className="mx-1 size-3 text-[#666]" strokeWidth={3} />
        <button className="mr-1.5 ml-0.5">admin</button>
        <ChevronRight className="size-3 text-[#666]" strokeWidth={3} />
        <button className="mx-1.5">Downloads</button>
        <ChevronRight className="size-3 text-[#666]" strokeWidth={3} />
        <button aria-label="Previous locations" className="ml-auto px-0.5"><ChevronDown className="size-3 text-[#555]" strokeWidth={3} /></button>
        <button aria-label="Refresh" className="flex h-full w-[17px] items-center justify-center border-l border-[#d9d9d9]">
          <RotateCw className="size-3 text-[#555]" strokeWidth={2.500} />
        </button>
      </div>
      <label className="ml-3 flex h-[22px] w-[202px] items-center border border-[#d9d9d9] pr-2 pl-2">
        <input aria-label="Search" placeholder="Search Downloads" className="w-full outline-none placeholder:text-[#6d6d6d]" />
        <svg viewBox="0 0 14 14" className="size-3.5 shrink-0" fill="none" stroke="#666">
          <circle cx="8.500" cy="5" r="3.300" strokeWidth="1.500" />
          <path d="M6 7.500L1.500 12" strokeWidth="2" />
        </svg>
      </label>
    </div>
    <div className="flex min-h-0 flex-1">
      <FolderTree />
      <div className="ml-px flex w-4 shrink-0 flex-col items-center bg-[#f0f0f0]">
        <ChevronUp className="h-5 w-3 shrink-0 text-[#444]" strokeWidth={3} />
        <div className="mt-[83px] h-[120px] w-full bg-[#cdcdcd]" />
        <ChevronDown className="mt-auto h-4 w-3 shrink-0 text-[#444]" strokeWidth={3} />
      </div>
      <div className="ml-1 flex min-w-0 flex-1 flex-col justify-between">
        <FileTable />
        <div className="flex h-[15px] items-center bg-[#f0f0f0]">
          <ChevronLeft className="h-3 w-4 text-[#444]" strokeWidth={3} />
          <div className="h-full flex-1 bg-[#cdcdcd]" />
          <ChevronRight className="mx-1 size-3 text-[#444]" strokeWidth={3} />
        </div>
      </div>
    </div>
    <div className="flex h-[26px] shrink-0 items-center justify-between pr-[9px] pl-3.5 text-[#1e395b]">
      <span>6 items</span>
      <div className="flex items-center gap-1">
        <button aria-label="Details view" className="flex h-[23px] w-[22px] items-center justify-center border border-[#26a0da] bg-[#cce8f6]">
          <svg viewBox="0 0 16 14" className="h-3.5 w-4">
            <path d="M.5.5h4v4h-4zM.5 4.500h4v4h-4zM.5 8.500h4v4h-4z" fill="#fff" stroke="#8b8b8b" />
            <path d="M2 2.500h1M2 6.500h1M2 10.500h1" stroke="#2c7db0" />
            <path d="M6.500 2.500h4M12 2.500h4M6.500 6.500h4M12 6.500h4M6.500 10.500h4M12 10.500h4" stroke="#555" />
          </svg>
        </button>
        <button aria-label="Thumbnail view"><PicturesIcon className="size-3.5" /></button>
      </div>
    </div>
  </section>
);

/* ---------- watermark ---------- */

const Watermark = () => (
  <div className="absolute right-12 bottom-2 flex items-center gap-1.5 font-['Roboto',sans-serif] text-[32px] leading-[60px] text-white drop-shadow-[0_0_2px_#aaa]">
    ANY
    <svg viewBox="0 0 58 62" className="h-[62px] w-14" fill="none" stroke="#fff" strokeWidth="3">
      <path d="M14 44V3l41 26-42 30-6-4V9l5-2" />
      <path d="M14 11l34 21M20 20l20 11-20 14z" />
    </svg>
    RUN
  </div>
);

/* ---------- taskbar ---------- */

const EdgeIcon = () => (
  <svg viewBox="0 0 24 24" className="size-6">
    <defs>
      <linearGradient id="edgeTop" x1="0" y1="0" x2="1" y2="0">
        <stop offset="0" stopColor="#2aa5dd" />
        <stop offset="1" stopColor="#63d45d" />
      </linearGradient>
    </defs>
    <circle cx="12" cy="12" r="12" fill="#1b7fd0" />
    <path d="M0 12a12 12 0 0 1 24-1c0 4-3 6-6 6-3 0-4-1-3-3 1-3-1-5-4-5-5 0-9 1-11 3z" fill="url(#edgeTop)" />
    <path d="M8 11c-4 6 1 13 8 12 3-.5 5-2 6-4-4 2-10 1-10-4 0-1 0-3 1-4-2-1-4-1-5 0z" fill="#12519f" />
    <path d="M11 12c2-2 4 0 3 2s0 4 4 4c-4 1-8-2-7-6z" fill="#011a26" />
  </svg>
);

const FilesIcon = () => (
  <svg viewBox="0 0 24 22" className="h-[22px] w-6">
    <path d="M1 2h8l2 2h12v16H1z" fill="#e8a42c" />
    <path d="M1 6h22v14H1z" fill="#fcd365" />
    <path d="M5 12h14v9h-4v-4H9v4H5z" fill="#3c8ed0" />
  </svg>
);

const FirefoxIcon = () => (
  <svg viewBox="0 0 24 24" className="size-6">
    <defs>
      <linearGradient id="fox" x1="1" y1="0" x2="0" y2="1">
        <stop offset="0" stopColor="#ffe04a" />
        <stop offset=".5" stopColor="#ff7b2e" />
        <stop offset="1" stopColor="#e8205f" />
      </linearGradient>
    </defs>
    <path d="M3 2l2 3 4-3v3c2 0 4-1 5-5 3 2 4 3 5 5l2-1c5 10 0 19-9 19S-3 14 3 2z" fill="url(#fox)" />
    <circle cx="12" cy="12" r="5" fill="#7a3fd0" />
    <path d="M5 8c3-2 6 0 8 2-3 0-4 1-4 3 2 2 5 1 6-1 2 5-6 7-9 3-2-2-2-5-1-7z" fill="#ff8a30" />
  </svg>
);

const OutlookIcon = () => (
  <svg viewBox="0 0 24 22" className="h-[22px] w-6">
    <rect x="8" y="0" width="14" height="14" fill="#1c7bd0" />
    <path d="M15 0h7v7h-7z" fill="#3aa9ea" />
    <path d="M7 10l9 5 8-5v12H7z" fill="#2f9be4" />
    <path d="M7 22l17-10v10z" fill="#58bdf2" />
    <rect x="0" y="5" width="12" height="12" rx="1" fill="#0f62ba" />
    <circle cx="6" cy="11" r="3" fill="none" stroke="#fff" strokeWidth="1.700" />
  </svg>
);

const apps = [
  { name: "Microsoft Edge", icon: <EdgeIcon />, bar: "inset-x-1", style: "" },
  { name: "File Explorer", icon: <FilesIcon />, bar: "inset-x-0", style: "bg-[#36474f]" },
  { name: "Firefox", icon: <FirefoxIcon />, bar: "", style: "" },
  { name: "Outlook", icon: <OutlookIcon />, bar: "inset-x-1", style: "" },
  { name: "WinRAR", icon: <RarIcon className="size-6" />, bar: "inset-x-1", style: "" },
];

const Taskbar = () => (
  <footer className="flex h-10 shrink-0 bg-linear-to-r from-[#001a24] to-[#00041a] text-white">
    <button aria-label="Start" className="flex w-12 items-center justify-center">
      <svg viewBox="0 0 16 16" className="size-4" fill="#fff">
        <path d="M0 2.200L6.500 1.300v6.200H0zM7.300 1.200L16 0v7.500H7.300zM0 8.300h6.500v6.300L0 13.700zM7.300 8.300H16V16l-8.700-1.200z" />
      </svg>
    </button>
    <label className="flex w-[288px] items-center gap-2 border border-[#c8c8c8] bg-[#f2f2f2] pl-2.5 text-[#222]">
      <Search className="size-5 shrink-0 -scale-x-100" strokeWidth={1.500} />
      <input aria-label="Search Windows" placeholder="Type here to search" className="w-full text-sm outline-none placeholder:text-[#3c3c3c]" />
    </label>
    <button aria-label="Task view" className="mr-[3px] flex w-12 items-center justify-center">
      <svg viewBox="0 0 16 16" className="size-4" fill="none" stroke="#fff">
        <path d="M.5 0v2.500h10V0M.5 16v-2.500h10V16M.5 4.500h10v7H.5zM14.500 0v4M14.500 9v7" />
        <path d="M14.500 5v3" strokeWidth="3" />
      </svg>
    </button>
    <div className="flex gap-px">
      {apps.map((app) => (
        <button key={app.name} aria-label={app.name} className={`relative flex w-12 items-center justify-center ${app.style}`}>
          {app.icon}
          {app.bar && <span className={`absolute bottom-0 h-0.5 bg-[#76b9ed] ${app.bar}`} />}
        </button>
      ))}
    </div>
    <div className="ml-auto flex items-center pr-1">
      <button aria-label="Hidden icons"><ChevronUp className="size-4" strokeWidth={2} /></button>
      <button aria-label="Meet now" className="ml-2">
        <svg viewBox="0 0 16 18" className="h-[18px] w-4" fill="none" stroke="#fff">
          <rect x="3.500" y="5.500" width="7" height="7" rx="1" />
          <path d="M10.500 8l3-2v6l-3-2M4 2.500c2-2 6-2 8 0M4 15.500c2 2 6 2 8 0" />
        </svg>
      </button>
      <button aria-label="Network" className="ml-2">
        <svg viewBox="0 0 16 16" className="size-4" fill="none" stroke="#fff">
          <path d="M5.500 3.500h10v7h-10zM7 13.500h7M10.500 11v2" />
          <path d="M.5 2.500h4v4h-4zM2.500 6.500v7h4" fill="#00101f" />
        </svg>
      </button>
      <button aria-label="Volume" className="ml-2">
        <svg viewBox="0 0 17 16" className="h-4 w-[17px]" fill="none" stroke="#fff">
          <path d="M.5 5.500h2l4-3.500v12l-4-3.500h-2zM9 6c1 1 1 3 0 4M11 4.500c2 2 2 5 0 7M13 3c3 3 3 7 0 10" />
        </svg>
      </button>
      <time className="ml-1.5 text-center text-[11px] leading-[18px]">7:09 PM<br />11/20/2024</time>
      <button aria-label="Notifications" className="mx-3.5">
        <svg viewBox="0 0 18 18" className="size-[18px]" fill="none" stroke="#fff" strokeWidth="1.200">
          <path d="M1 1.500h16v12h-5.500l-3 3-3-3H1z" />
        </svg>
      </button>
      <span className="ml-[5px] h-full w-px bg-[#4b5563]" />
    </div>
  </footer>
);

const App = () => {
  return (
    <div className="flex h-screen flex-col overflow-hidden font-['Open_Sans','Noto_Sans',sans-serif]">
      <main className="relative flex-1">
        <Browser />
        <WinRar />
        <Explorer />
        <Watermark />
      </main>
      <Taskbar />
    </div>
  );
};

export default App;
